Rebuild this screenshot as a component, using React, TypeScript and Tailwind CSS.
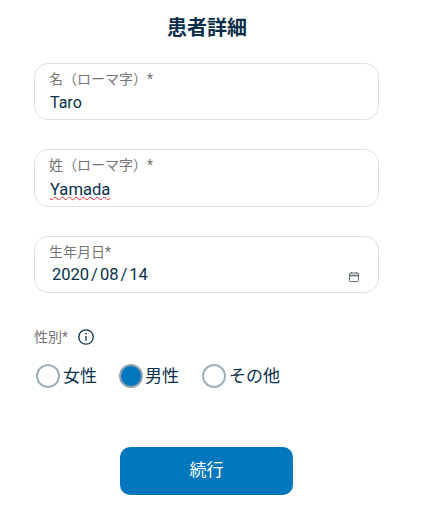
import React from 'react';

const font = 'font-["Roboto","Noto_Sans_CJK_JP",sans-serif]';

const Field: React.FC<{ label: string; children: React.ReactNode; h: string }> = ({ label, children, h }) => (
  <div className={`${h} w-[345px] rounded-[14px] border border-[#e0e0e0] bg-white pl-[14px] pr-[18px] pt-[5px]`}>
    <div className="text-[14px] leading-[20px] text-[#757575]">{label}</div>
    {children}
  </div>
);

const Radio: React.FC<{ label: string; checked?: boolean; className?: string }> = ({ label, checked, className }) => (
  <div className={`flex items-center ${checked ? 'gap-[2px]' : 'gap-[3px]'} ${className ?? ''}`}>
    <span
      className={
        checked
          ? 'h-[24px] w-[24px] rounded-full border-2 border-[#8fa3b3] bg-[#0277bd]'
          : 'h-[24px] w-[24px] rounded-full border-2 border-[#9fb0bd] bg-white'
      }
    />
    <span className="text-[17px] leading-[24px] text-[#0a2f4a]">{label}</span>
  </div>
);

export default function App() {
  return (
    <div className={`${font} h-[513px] w-[421px] overflow-hidden bg-white pl-[34px]`}>
      <h1 className="w-[346px] pt-[16px] text-center text-[20px] font-bold leading-[24px] text-[#0a2f4a]">患者詳細</h1>

      <div className="mt-[23px] flex flex-col gap-[29px]">
        <Field label="名（ローマ字）*" h="h-[57px]">
          <div className="mt-[2px] pl-[1px] text-[16px] leading-[24px] text-[#0a2f4a]">Taro</div>
        </Field>
        <Field label="姓（ローマ字）*" h="h-[58px]">
          <div className="mt-[2px] pl-[1px] text-[16.6px] leading-[26px] text-[#0a2f4a]">
            <span className="underline decoration-red-500 decoration-wavy decoration-1 underline-offset-1">Yamada</span>
          </div>
        </Field>
      </div>

      <div className="mt-[29px]">
        <Field label="生年月日*" h="h-[57px]">
          <div className="mt-[1px] flex items-center justify-between pl-[3px]">
            <span className="text-[16.5px] leading-[24px] text-[#0a2f4a]">
              2020<span className="mx-[2px]">/</span>08<span className="mx-[2px]">/</span>14
            </span>
            <svg width="12" height="12" viewBox="0 0 12 12" fill="none" className="mt-[3px] text-[#5f6b73]">
              <rect x="1.5" y="2" width="9" height="8.5" rx="1" stroke="currentColor" />
              <path d="M1.5 4.5h9" stroke="currentColor" strokeWidth="1.5" />
              <path d="M3.5 1v1.5M8.5 1v1.5" stroke="currentColor" />
            </svg>
          </div>
        </Field>
      </div>

      <div className="mt-[34px] flex h-[20px] items-center">
        <span className="text-[14px] leading-[20px] text-[#757575]">性別*</span>
        <svg width="18" height="18" viewBox="0 0 18 18" fill="none" className="ml-[9px] text-[#0a2f4a]">
          <circle cx="9" cy="9" r="7.2" stroke="currentColor" strokeWidth="1.3" />
          <path d="M9 8v4.5" stroke="currentColor" strokeWidth="1.3" />
          <circle cx="9" cy="5.6" r="0.9" fill="currentColor" />
        </svg>
      </div>

      <div className="mt-[17px] flex items-center pl-[2px]">
        <Radio label="女性" />
        <Radio label="男性" checked className="ml-[22px]" />
        <Radio label="その他" className="ml-[23px]" />
      </div>

      <button className="ml-[86px] mt-[59px] flex h-[48px] w-[173px] items-center justify-center rounded-[10px] bg-[#0277bd] text-[17px] text-white">
        続行
      </button>
    </div>
  );
}
